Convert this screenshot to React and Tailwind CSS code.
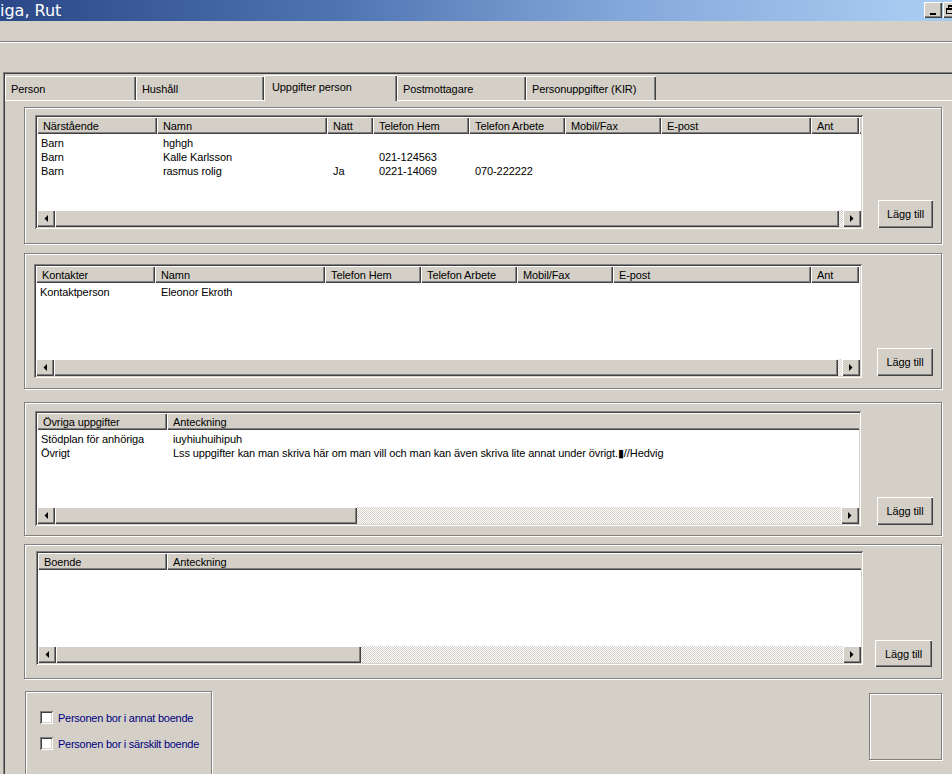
import React from "react";

const RAISED = "shadow-[inset_1px_1px_0_#ffffff,inset_-1px_-1px_0_#404040,inset_-2px_-2px_0_#808080]";
const SUNKEN = "shadow-[inset_1px_1px_0_#808080,inset_-1px_-1px_0_#ffffff,inset_2px_2px_0_#404040,inset_-2px_-2px_0_#d4d0c8]";
const ETCHED = "border border-[#808080] shadow-[inset_1px_1px_0_#ffffff,1px_1px_0_#ffffff]";
const DITHER = "bg-[image:repeating-conic-gradient(#ffffff_0%_25%,#d4d0c8_0%_50%)] bg-[length:2px_2px]";

function Arrow({ dir }) {
  return (
    <div className={`w-[18px] h-[17px] shrink-0 bg-[#d4d0c8] flex items-center justify-center ${RAISED}`}>
      <svg width="4" height="7" viewBox="0 0 4 7">
        {dir === "left" ? (
          <polygon points="4,0 4,7 0.5,3.5" fill="#000" />
        ) : (
          <polygon points="0,0 0,7 3.5,3.5" fill="#000" />
        )}
      </svg>
    </div>
  );
}

function ListView({ box, cols, rows, thumb, fillLast }) {
  return (
    <div className={`${box} shrink-0 p-[2px] flex flex-col bg-white ${SUNKEN}`}>
      <div className="h-[17px] flex shrink-0 bg-[#d4d0c8] overflow-hidden">
        {cols.map((c, i) => {
          const last = fillLast && i === cols.length - 1;
          return (
            <div
              key={i}
              className={`${last ? "flex-1 shadow-[inset_1px_1px_0_#ffffff,inset_0_-1px_0_#404040,inset_0_-2px_0_#808080]" : `${c.w} shrink-0 ${RAISED}`} h-full flex items-center pl-[6px] whitespace-nowrap overflow-hidden`}
            >
              {c.t}
            </div>
          );
        })}
        {!fillLast && <div className="flex-1 shadow-[inset_1px_1px_0_#ffffff,inset_0_-1px_0_#404040,inset_0_-2px_0_#808080]" />}
      </div>
      <div className="flex-1 bg-white pt-[2px] overflow-hidden">
        {rows.map((r, ri) => (
          <div key={ri} className="h-[14px] flex">
            {cols.map((c, i) => {
              const last = fillLast && i === cols.length - 1;
              return (
                <div
                  key={i}
                  className={`${last ? "flex-1" : `${c.w} shrink-0`} ${i === 0 ? "pl-[4px]" : "pl-[6px]"} whitespace-nowrap`}
                >
                  {r[i] || ""}
                </div>
              );
            })}
          </div>
        ))}
      </div>
      <div className={`h-[17px] shrink-0 flex ${DITHER}`}>
        <Arrow dir="left" />
        <div className={`${thumb} h-full shrink-0 bg-[#d4d0c8] ${RAISED}`} />
        <div className="flex-1" />
        <Arrow dir="right" />
      </div>
    </div>
  );
}

function Button({ cls }) {
  return (
    <div className={`${cls} shrink-0 bg-[#d4d0c8] flex items-center justify-center ${RAISED}`}>
      Lägg till
    </div>
  );
}

function Tab({ w, label, selected }) {
  if (selected) {
    return (
      <div className={`${w} h-[26px] mb-[-1px] relative z-10 bg-[#d4d0c8] flex items-center pl-[8px] pb-[3px] shadow-[inset_1px_1px_0_#ffffff,inset_-1px_0_0_#404040,inset_-2px_0_0_#808080]`}>
        {label}
      </div>
    );
  }
  return (
    <div className={`${w} h-[24px] flex items-center pl-[6px] pt-[2px] shadow-[inset_1px_1px_0_#ffffff,inset_-1px_0_0_#404040,inset_-2px_0_0_#808080]`}>
      {label}
    </div>
  );
}

function Checkbox({ label, cls }) {
  return (
    <div className={`${cls} h-[13px] flex items-center`}>
      <div className={`w-[13px] h-[13px] bg-white shrink-0 ${SUNKEN}`} />
      <span className="ml-[5px] text-[#000080] whitespace-nowrap tracking-[-0.25px]">{label}</span>
    </div>
  );
}

const cols1 = [
  { t: "Närstående", w: "w-[120px]" },
  { t: "Namn", w: "w-[170px]" },
  { t: "Natt", w: "w-[46px]" },
  { t: "Telefon Hem", w: "w-[96px]" },
  { t: "Telefon Arbete", w: "w-[96px]" },
  { t: "Mobil/Fax", w: "w-[96px]" },
  { t: "E-post", w: "w-[150px]" },
  { t: "Ant", w: "w-[48px]" },
];
const rows1 = [
  ["Barn", "hghgh"],
  ["Barn", "Kalle Karlsson", "", "021-124563"],
  ["Barn", "rasmus rolig", "Ja", "0221-14069", "070-222222"],
];
const cols2 = [
  { t: "Kontakter", w: "w-[119px]" },
  { t: "Namn", w: "w-[170px]" },
  { t: "Telefon Hem", w: "w-[96px]" },
  { t: "Telefon Arbete", w: "w-[96px]" },
  { t: "Mobil/Fax", w: "w-[96px]" },
  { t: "E-post", w: "w-[198px]" },
  { t: "Ant", w: "w-[48px]" },
];
const rows2 = [["Kontaktperson", "Eleonor Ekroth"]];
const cols3 = [
  { t: "Övriga uppgifter", w: "w-[130px]" },
  { t: "Anteckning", w: "w-[600px]" },
];
const rows3 = [
  ["Stödplan för anhöriga", "iuyhiuhuihipuh"],
  ["Övrigt", "Lss uppgifter kan man skriva här om man vill och man kan även skriva lite annat under övrigt.▮//Hedvig"],
];
const cols4 = [
  { t: "Boende", w: "w-[129px]" },
  { t: "Anteckning", w: "w-[600px]" },
];

export default function App() {
  return (
    <div className="w-[952px] h-[774px] overflow-hidden bg-[#d4d0c8] font-['Liberation_Sans',Arial,sans-serif] text-[11px] leading-[14px] tracking-[-0.1px] text-black flex flex-col">
      {/* Title bar */}
      <div className="h-[21px] shrink-0 flex items-center bg-[image:linear-gradient(90deg,#2b4888_0%,#4f73b1_35%,#84a7da_65%,#a6caf0_95%)]">
        <span className="font-['DejaVu_Sans',sans-serif] text-[16px] leading-[21px] tracking-normal text-white whitespace-nowrap">iga, Rut</span>
        <div className="ml-auto mr-[-9px] flex gap-[1px] items-start self-start mt-[2px]">
          <div className={`w-[18px] h-[16px] bg-[#d4d0c8] relative ${RAISED}`}>
            <div className="absolute left-[6px] top-[11px] w-[6px] h-[2px] bg-black" />
          </div>
          <div className={`w-[18px] h-[16px] bg-[#d4d0c8] flex items-start justify-start pl-[3px] pt-[3px] ${RAISED}`}>
            <svg width="9" height="9" viewBox="0 0 9 9">
              <rect x="2.5" y="0.5" width="6" height="5" fill="none" stroke="#000" />
              <rect x="2" y="0" width="7" height="2" fill="#000" />
              <rect x="0.5" y="3.5" width="6" height="5" fill="#d4d0c8" stroke="#000" />
              <rect x="0" y="3" width="7" height="2" fill="#000" />
            </svg>
          </div>
        </div>
      </div>

      {/* menu area etched line */}
      <div className="mt-[20px] h-[2px] shrink-0 border-t border-b border-t-[#808080] border-b-white" />

      {/* frame */}
      <div className="mt-[29px] ml-[3px] flex-1 flex flex-col pt-[2px] pl-[2px] shadow-[inset_1px_1px_0_#808080,inset_2px_2px_0_#404040]">
        {/* tabs */}
        <div className="h-[25px] mt-[1px] flex items-end shrink-0">
          <Tab w="w-[131px]" label="Person" />
          <Tab w="w-[128px]" label="Hushåll" />
          <Tab w="w-[133px]" label="Uppgifter person" selected />
          <Tab w="w-[129px]" label="Postmottagare" />
          <Tab w="w-[130px]" label="Personuppgifter (KIR)" />
        </div>

        {/* page */}
        <div className="border-t border-white flex-1 flex flex-col pl-[19px]">
          {/* Group 1 */}
          <div className={`mt-[6px] w-[918px] h-[137px] shrink-0 flex items-start ${ETCHED}`}>
            <div className="ml-[10px] mt-[7px]">
              <ListView box="w-[828px] h-[114px]" cols={cols1} rows={rows1} thumb="w-[784px]" />
            </div>
            <div className="ml-[15px] mt-[92px]">
              <Button cls="w-[55px] h-[28px]" />
            </div>
          </div>

          {/* Group 2 */}
          <div className={`mt-[9px] w-[918px] h-[136px] shrink-0 flex items-start ${ETCHED}`}>
            <div className="ml-[9px] mt-[10px]">
              <ListView box="w-[828px] h-[114px]" cols={cols2} rows={rows2} thumb="w-[784px]" />
            </div>
            <div className="ml-[15px] mt-[94px]">
              <Button cls="w-[56px] h-[28px]" />
            </div>
          </div>

          {/* Group 3 */}
          <div className={`mt-[13px] w-[918px] h-[134px] shrink-0 flex items-start ${ETCHED}`}>
            <div className="ml-[10px] mt-[8px]">
              <ListView box="w-[826px] h-[115px]" cols={cols3} rows={rows3} thumb="w-[302px]" fillLast />
            </div>
            <div className="ml-[16px] mt-[94px]">
              <Button cls="w-[56px] h-[28px]" />
            </div>
          </div>

          {/* Group 4 */}
          <div className={`mt-[8px] w-[918px] h-[135px] shrink-0 flex items-start ${ETCHED}`}>
            <div className="ml-[11px] mt-[6px]">
              <ListView box="w-[827px] h-[114px]" cols={cols4} rows={[]} thumb="w-[305px]" fillLast />
            </div>
            <div className="ml-[12px] mt-[95px]">
              <Button cls="w-[57px] h-[27px]" />
            </div>
          </div>

          {/* bottom row */}
          <div className="mt-[12px] w-[918px] flex items-start justify-between shrink-0">
            <div className={`ml-[1px] w-[187px] h-[100px] pt-[19px] pl-[14px] ${ETCHED}`}>
              <Checkbox label="Personen bor i annat boende" cls="" />
              <Checkbox label="Personen bor i särskilt boende" cls="mt-[13px]" />
            </div>
            <div className={`mt-[2px] w-[73px] h-[67px] ${ETCHED}`} />
          </div>
        </div>
      </div>
    </div>
  );
}
